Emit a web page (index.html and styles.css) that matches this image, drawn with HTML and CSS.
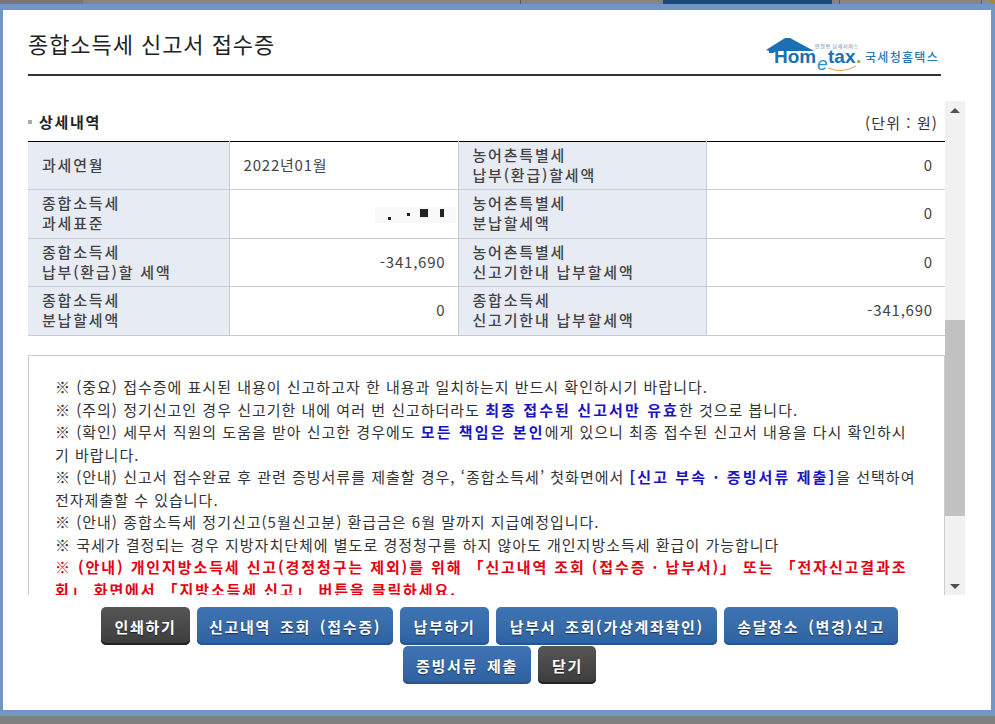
FILE: index.html
```html
<!DOCTYPE html>
<html lang="ko">
<head>
    <meta charset="utf-8">
    <title>종합소득세 신고서 접수증</title>
    <link rel="stylesheet" href="styles.css">
</head>
<body>
    <div class="top-tabs">
        <div class="tab tab-first"></div>
        <div class="tab tab-a"></div>
        <div class="tab tab-b"></div>
        <div class="tab tab-active"></div>
        <div class="tab tab-c"></div>
        <div class="tab tab-d"></div>
        <div class="tab tab-last"></div>
    </div>
    <div class="dialog">
        <div class="head">
            <h1>종합소득세 신고서 접수증</h1>
            <svg class="logo" width="176" height="36" viewBox="0 0 176 36">
                <path d="M0 13 L19 1 H24 L48 14 H11 L7 16 H3 V14 Z" fill="#1c6fb0"/>
                <path d="M62 31 Q76 37 90 29" fill="none" stroke="#e9a23b" stroke-width="1"/>
                <text x="8" y="26" class="logo-word">Hom</text>
                <text x="51" y="33" class="logo-e">e</text>
                <text x="62" y="26" class="logo-word">tax</text>
                <text x="90" y="26" class="logo-dot">.</text>
                <text x="49" y="11" class="logo-small">민원형 납세서비스</text>
                <text x="99" y="25" class="logo-name">국세청홈택스</text>
            </svg>
        </div>

        <div class="scroll-wrap">
            <div class="scroll-content">
                <div class="sub-head">
                    <h2><span class="bullet"></span>상세내역</h2>
                    <span class="unit">(단위 : 원)</span>
                </div>
                <table class="detail">
                    <tr>
                        <th>과세연월</th>
                        <td class="left">2022년01월</td>
                        <th>농어촌특별세<br>납부(환급)할세액</th>
                        <td>0</td>
                    </tr>
                    <tr>
                        <th>종합소득세<br>과세표준</th>
                        <td>
                            <span class="masked">
                                <i class="m1"></i><i class="m2"></i><i class="m3"></i><i class="m4"></i>
                            </span>
                        </td>
                        <th>농어촌특별세<br>분납할세액</th>
                        <td>0</td>
                    </tr>
                    <tr>
                        <th>종합소득세<br>납부(환급)할 세액</th>
                        <td>-341,690</td>
                        <th>농어촌특별세<br>신고기한내 납부할세액</th>
                        <td>0</td>
                    </tr>
                    <tr>
                        <th>종합소득세<br>분납할세액</th>
                        <td>0</td>
                        <th>종합소득세<br>신고기한내 납부할세액</th>
                        <td>-341,690</td>
                    </tr>
                </table>
                <div class="notes">
                    <p>※ (중요) 접수증에 표시된 내용이 신고하고자 한 내용과 일치하는지 반드시 확인하시기 바랍니다.</p>
                    <p>※ (주의) 정기신고인 경우 신고기한 내에 여러 번 신고하더라도 <b>최종 접수된 신고서만 유효</b>한 것으로 봅니다.</p>
                    <p>※ (확인) 세무서 직원의 도움을 받아 신고한 경우에도 <b>모든 책임은 본인</b>에게 있으니 최종 접수된 신고서 내용을 다시 확인하시기 바랍니다.</p>
                    <p>※ (안내) 신고서 접수완료 후 관련 증빙서류를 제출할 경우, ‘종합소득세’ 첫화면에서 <b>[신고 부속 · 증빙서류 제출]</b>을 선택하여 전자제출할 수 있습니다.</p>
                    <p>※ (안내) 종합소득세 정기신고(5월신고분) 환급금은 6월 말까지 지급예정입니다.</p>
                    <p>※ 국세가 결정되는 경우 지방자치단체에 별도로 경정청구를 하지 않아도 개인지방소득세 환급이 가능합니다</p>
                    <p class="red">※ (안내) 개인지방소득세 신고(경정청구는 제외)를 위해 「신고내역 조회 (접수증 · 납부서)」 또는 「전자신고결과조회」 화면에서 「지방소득세 신고」 버튼을 클릭하세요.</p>
                </div>
            </div>
            <div class="scrollbar">
                <div class="arrow"><span class="up"></span></div>
                <div class="track-top"></div>
                <div class="thumb"></div>
                <div class="track-bottom"></div>
                <div class="arrow"><span class="down"></span></div>
            </div>
        </div>

        <div class="buttons">
            <button class="btn dark">인쇄하기</button>
            <button class="btn wide">신고내역 조회 (접수증)</button>
            <button class="btn">납부하기</button>
            <button class="btn">납부서 조회(가상계좌확인)</button>
            <button class="btn narrow">송달장소 (변경)신고</button>
            <button class="btn">증빙서류 제출</button>
            <button class="btn dark">닫기</button>
        </div>
    </div>
</body>
</html>
```

FILE: styles.css
```css
* {
    box-sizing: border-box;
}
html, body {
    margin: 0;
    padding: 0;
}
body {
    width: 995px;
    height: 724px;
    overflow: hidden;
    background-color: #808080;
    font-family: "Noto Sans CJK KR", "Liberation Sans", sans-serif;
    color: #333;
}
/* Strip of the page behind the dialog */
.top-tabs {
    height: 4px;
    display: flex;
    background-color: #858585;
}
.tab {
    border-right: 1px solid #5c5c5c;
}
.tab-first {
    width: 83px;
    background-color: #777;
    border-right: 0;
}
.tab-a {
    width: 438px;
}
.tab-b {
    width: 142px;
    border-right: 0;
}
.tab-active {
    width: 169px;
    background-color: #1b4a78;
    border-right: 0;
}
.tab-c {
    width: 8px;
}
.tab-d {
    width: 142px;
}
.tab-last {
    flex-grow: 1;
    background: linear-gradient(90deg, #8c8c8c 0, #8c8c8c 8px, #a8873c 8px);
    border-right: 0;
}
.dialog {
    width: 995px;
    height: 712px;
    background-color: #fff;
    border-style: solid;
    border-color: #7195c4;
    border-width: 6px 4px 6px 3px;
    padding: 0 25px;
}
.head {
    height: 66px;
    width: 913px;
    border-bottom: 2px solid #333;
    display: flex;
    justify-content: space-between;
    align-items: flex-end;
}
.head h1 {
    margin: 0 0 16px;
    font-size: 22px;
    font-weight: 400;
    line-height: 30px;
    color: #222;
    letter-spacing: 0.94px;
}
.logo {
    margin-right: -1px;
    margin-bottom: 1px;
}
.logo-word {
    font-family: "Liberation Sans", sans-serif;
    font-size: 19px;
    font-weight: 700;
    fill: #1c6fb0;
}
.logo-e {
    font-family: "Liberation Sans", sans-serif;
    font-size: 19px;
    font-style: italic;
    fill: #2b8fd0;
}
.logo-dot {
    font-family: "Liberation Sans", sans-serif;
    font-size: 19px;
    font-weight: 700;
    fill: #7db43c;
}
.logo-small {
    font-size: 5px;
    letter-spacing: 0.6px;
    fill: #5a7ea8;
}
.logo-name {
    font-size: 12px;
    font-weight: 500;
    letter-spacing: 1.3px;
    fill: #2a77b5;
}
.scroll-wrap {
    margin-top: 25px;
    width: 937px;
    height: 494px;
    display: flex;
}
.scroll-content {
    width: 917px;
    height: 494px;
    overflow: hidden;
}
.sub-head {
    height: 40px;
    padding-top: 9px;
    display: flex;
    justify-content: space-between;
    align-items: flex-start;
}
.sub-head h2 {
    margin: 0;
    font-size: 15px;
    line-height: 24px;
    font-weight: 700;
    letter-spacing: 1.7px;
    color: #222;
    display: flex;
    align-items: center;
}
.bullet {
    width: 4px;
    height: 4px;
    margin-right: 7px;
    background-color: #aaa;
}
.unit {
    font-size: 15px;
    line-height: 26px;
    padding-right: 7px;
    letter-spacing: 1.1px;
    color: #333;
}
.detail {
    width: 917px;
    height: 195px;
    border-collapse: collapse;
    table-layout: fixed;
    border-top: 1px solid #000;
    font-size: 15px;
    line-height: 20px;
}
.detail tr:nth-child(odd) {
    height: 48px;
}
.detail tr:nth-child(even) {
    height: 49px;
}
.detail th {
    width: 201px;
    padding: 0 13px 2px 14px;
    background-color: #e6ebf4;
    border-bottom: 1px solid #c5ccd6;
    border-right: 1px solid #c5ccd6;
    text-align: left;
    font-weight: 500;
    letter-spacing: 1.8px;
    color: #444;
}
.detail td {
    padding: 0 12px 2px 13px;
    border-bottom: 1px solid #c5ccd6;
    border-right: 1px solid #c5ccd6;
    text-align: right;
    letter-spacing: 0.8px;
    color: #444;
}
.detail th:nth-child(3) {
    width: 248px;
}
.detail td:nth-child(2) {
    width: 229px;
}
.detail td:last-child {
    border-right: 0;
}
.detail td.left {
    text-align: left;
    padding-left: 14px;
}
.masked {
    display: inline-flex;
    align-items: flex-start;
    height: 16px;
    padding: 2px 12px 0 13px;
    margin-right: -10px;
    background-color: #f9f9f9;
    vertical-align: middle;
}
.masked i {
    display: block;
    background-color: #222;
}
.m1 { width: 3px; height: 3px; margin-top: 8px; }
.m2 { width: 3px; height: 3px; margin-top: 4px; margin-left: 16px; }
.m3 { width: 8px; height: 8px; margin-left: 10px; }
.m4 { width: 4px; height: 8px; margin-left: 12px; }
.notes {
    margin-top: 19px;
    border: 1px solid #ccc;
    padding: 20px 26px 20px 26px;
    font-size: 15px;
    line-height: 22.5px;
    letter-spacing: 1px;
    word-break: break-all;
    color: #333;
}
.notes p {
    margin: 0;
}
.notes b {
    color: #1a13c0;
    font-weight: 700;
    letter-spacing: 2.1px;
}
.notes .red {
    color: #e60012;
    font-weight: 700;
    letter-spacing: 1.9px;
}
.scrollbar {
    width: 20px;
    display: flex;
    flex-direction: column;
    background-color: #f1f1f1;
}
.arrow {
    height: 18px;
    display: flex;
    align-items: center;
    justify-content: center;
}
.up, .down {
    width: 0;
    height: 0;
    border-left: 5px solid transparent;
    border-right: 5px solid transparent;
}
.up {
    border-bottom: 5px solid #505050;
}
.down {
    border-top: 5px solid #505050;
}
.track-top {
    height: 201px;
}
.thumb {
    height: 196px;
    background-color: #c1c1c1;
}
.track-bottom {
    flex-grow: 1;
}
.buttons {
    margin-top: 12px;
    padding: 0 10px 0 16px;
    width: 937px;
    display: flex;
    flex-wrap: wrap;
    justify-content: center;
    gap: 1px 7px;
}
.btn {
    height: 38px;
    padding: 0 13.5px;
    border: 0;
    border-radius: 5px;
    background: linear-gradient(#3f74b4, #2f619f);
    box-shadow: inset 0 -2px 0 #28558d;
    color: #fff;
    font-family: inherit;
    font-size: 15px;
    font-weight: 700;
    letter-spacing: 1.7px;
    word-spacing: 3px;
    text-shadow: 0 1px 1px rgba(0, 0, 0, 0.5);
}
.btn.wide {
    padding: 0 12px;
}
.btn.narrow {
    padding: 0 13px;
}
.btn.dark {
    background: linear-gradient(#565656, #3c3c3c);
    box-shadow: inset 0 -2px 0 #222;
}
```
